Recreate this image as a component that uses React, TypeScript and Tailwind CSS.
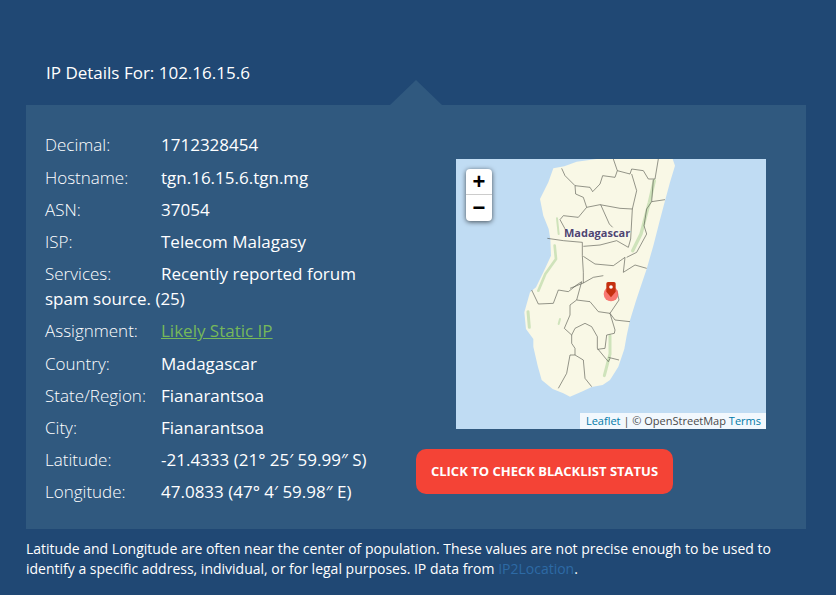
import React from 'react';

const rows: { label: string; value: React.ReactNode }[] = [
  { label: 'Decimal:', value: '1712328454' },
  { label: 'Hostname:', value: 'tgn.16.15.6.tgn.mg' },
  { label: 'ASN:', value: '37054' },
  { label: 'ISP:', value: 'Telecom Malagasy' },
  { label: 'Services:', value: 'Recently reported forum spam source. (25)' },
  { label: 'Assignment:', value: <a className="text-[#76b85a] underline">Likely Static IP</a> },
  { label: 'Country:', value: 'Madagascar' },
  { label: 'State/Region:', value: 'Fianarantsoa' },
  { label: 'City:', value: 'Fianarantsoa' },
  { label: 'Latitude:', value: '-21.4333 (21° 25′ 59.99″ S)' },
  { label: 'Longitude:', value: '47.0833 (47° 4′ 59.98″ E)' },
];

const land =
  'M292,28 L325,22 L362,8 L422,0 L650,0 L657,20 L642,70 L627,125 L610,190 L592,260 L572,330 L555,380 L540,425 L522,484 L512,530 L505,570 L487,623 L462,663 L440,678 L407,684 L380,697 L342,713 L322,703 L290,690 L257,663 L245,620 L232,563 L232,540 L210,510 L205,460 L222,400 L240,385 L262,340 L285,290 L283,240 L278,210 L262,170 L252,120 L277,70 Z';

// traced from the north half, offset by translate(192,0)
const northBorders = [
  'M125,28 L135,50 L165,80 L167,105 L190,115 L200,145 L175,175 L130,170 L120,182 L138,215',
  'M82,238 L130,245 L187,250 L187,290 L190,340 L190,372 L150,388',
  'M165,80 L210,85 L218,98 L240,75 L248,50 L285,55 L292,35 L280,0',
  'M292,35 L330,45 L335,30 L370,35 L385,60 L405,60 L415,0',
  'M335,45 L350,95 L337,150 L300,148 L240,137 L200,145',
  'M242,137 L268,195 L278,205',
  'M337,150 L332,240 L325,265 L290,245 L240,258 L190,262',
  'M190,292 L225,315 L280,320 L315,295 L310,340 L345,318 L380,328',
  'M190,372 L220,355 L250,350',
  'M400,62 L395,128 L380,150 L372,200 L380,225 L350,280 L320,295',
  'M395,128 L435,122',
];

// traced from the south half, offset by translate(192,363)
const southBorders = [
  'M35,30 L55,72 L100,70 L115,30 L145,35 L170,15 L185,5',
  'M185,5 L170,60 L210,65 L235,95 L270,100 L297,60 L290,30',
  'M170,60 L150,75 L150,105 L133,145 L155,165 L155,190 L165,205 L165,225',
  'M155,165 L165,145 L195,130 L215,140 L232,170 L232,205 L265,245 L270,235',
  'M270,100 L285,120 L330,125',
  'M270,100 L285,150 L283,160 L260,165 L255,205 L232,208',
  'M265,232 L297,240',
  'M165,225 L150,225 L140,280 L115,325',
  'M165,225 L190,240 L195,295 L215,320',
];

function MadagascarMap() {
  return (
    <div className="relative h-[270px] w-[310px] overflow-hidden bg-[#c0dcf3]">
      <svg viewBox="0 0 930 810" className="h-full w-full blur-[0.3px]">
        <path d={land} fill="#f9f8e6" />
        <g fill="none" stroke="#cfe3bb" strokeLinecap="round" strokeLinejoin="round">
          <path d="M595,65 L580,130 L568,175 L555,225 L530,275" strokeWidth="10" />
          <path d="M303,178 L308,225" strokeWidth="6" />
          <path d="M296,260 L300,300 L268,345 L247,395" strokeWidth="8" />
          <path d="M216,458 L220,505" strokeWidth="9" />
          <path d="M312,480 L308,495" strokeWidth="6" />
          <path d="M462,530 L462,585 L445,650" strokeWidth="9" />
        </g>
        <g fill="none" stroke="#4f5148" strokeWidth="1.8" strokeLinejoin="round">
          <g transform="translate(192,0)">
            {northBorders.map((d, i) => (
              <path key={i} d={d} />
            ))}
          </g>
          <g transform="translate(192,363)">
            {southBorders.map((d, i) => (
              <path key={i} d={d} />
            ))}
          </g>
        </g>
        <circle cx="465" cy="405" r="22" fill="#f8605c" opacity="0.85" />
        <path d="M451,374 Q451,369 456,369 H474 Q479,369 479,374 V398 L465,415 L451,398 Z" fill="#c5300f" />
        <circle cx="465" cy="384" r="5.5" fill="#ffffff" />
      </svg>

      <div className="absolute left-[10px] top-[10px] flex w-[26px] flex-col overflow-hidden rounded-[4px] bg-white text-center font-['Liberation_Sans',sans-serif] text-[22px] font-bold leading-[26px] text-black shadow-[0_1px_5px_rgba(0,0,0,0.65)]">
        <span className="h-[26px] border-b border-[#cccccc]">+</span>
        <span className="h-[26px]">−</span>
      </div>

      <span className="absolute left-[108px] top-[66px] text-[11px] font-bold leading-[16px] text-[#4f4570] [text-shadow:0_0_2px_#fff]">
        Madagascar
      </span>

      <div className="absolute bottom-0 right-0 bg-white/80 pl-[6px] pr-[5px] text-[11px] leading-[16px] text-[#4a4a4a]">
        <span className="text-[#0078a8]">Leaflet</span> | © OpenStreetMap <span className="text-[#0078a8]">Terms</span>
      </div>
    </div>
  );
}

export default function App() {
  return (
    <div className="h-[595px] w-[836px] overflow-hidden bg-[#204874] px-[26px] pt-[60px] font-['Open_Sans',sans-serif] text-white">
      <h2 className="pl-5 text-[17px] font-normal leading-[26px]">IP Details For: 102.16.15.6</h2>

      <div className="relative mt-[19px] flex h-[424px] w-[780px] bg-[#30597f] px-5 pt-[27.4px]">
        <div className="absolute left-[364px] top-[-25px] h-[25px] w-[52px] bg-[#30597f] [clip-path:polygon(50%_0,100%_100%,0_100%)]" />

        <div className="-ml-px w-[351px] shrink-0">
          {rows.map(row => (
            <div key={row.label} className="mb-[6.62px] text-[17px] leading-[25.5px]">
              <span className="inline-block w-[116px] font-light">{row.label}</span>
              <span>{row.value}</span>
            </div>
          ))}
        </div>

        <div className="ml-5 pt-[26.6px]">
          <div className="ml-10">
            <MadagascarMap />
          </div>
          <button className="mt-5 h-[45px] w-[257px] rounded-[10px] bg-[#f44336] text-[13px] font-bold uppercase text-white">
            Click to check blacklist status
          </button>
        </div>
      </div>

      <p className="mt-[10px] text-[14px] leading-[20px]">
        Latitude and Longitude are often near the center of population. These values are not precise enough to be used to
        identify a specific address, individual, or for legal purposes. IP data from{' '}
        <a className="text-[#2d6aa5]">IP2Location</a>.
      </p>
    </div>
  );
}
